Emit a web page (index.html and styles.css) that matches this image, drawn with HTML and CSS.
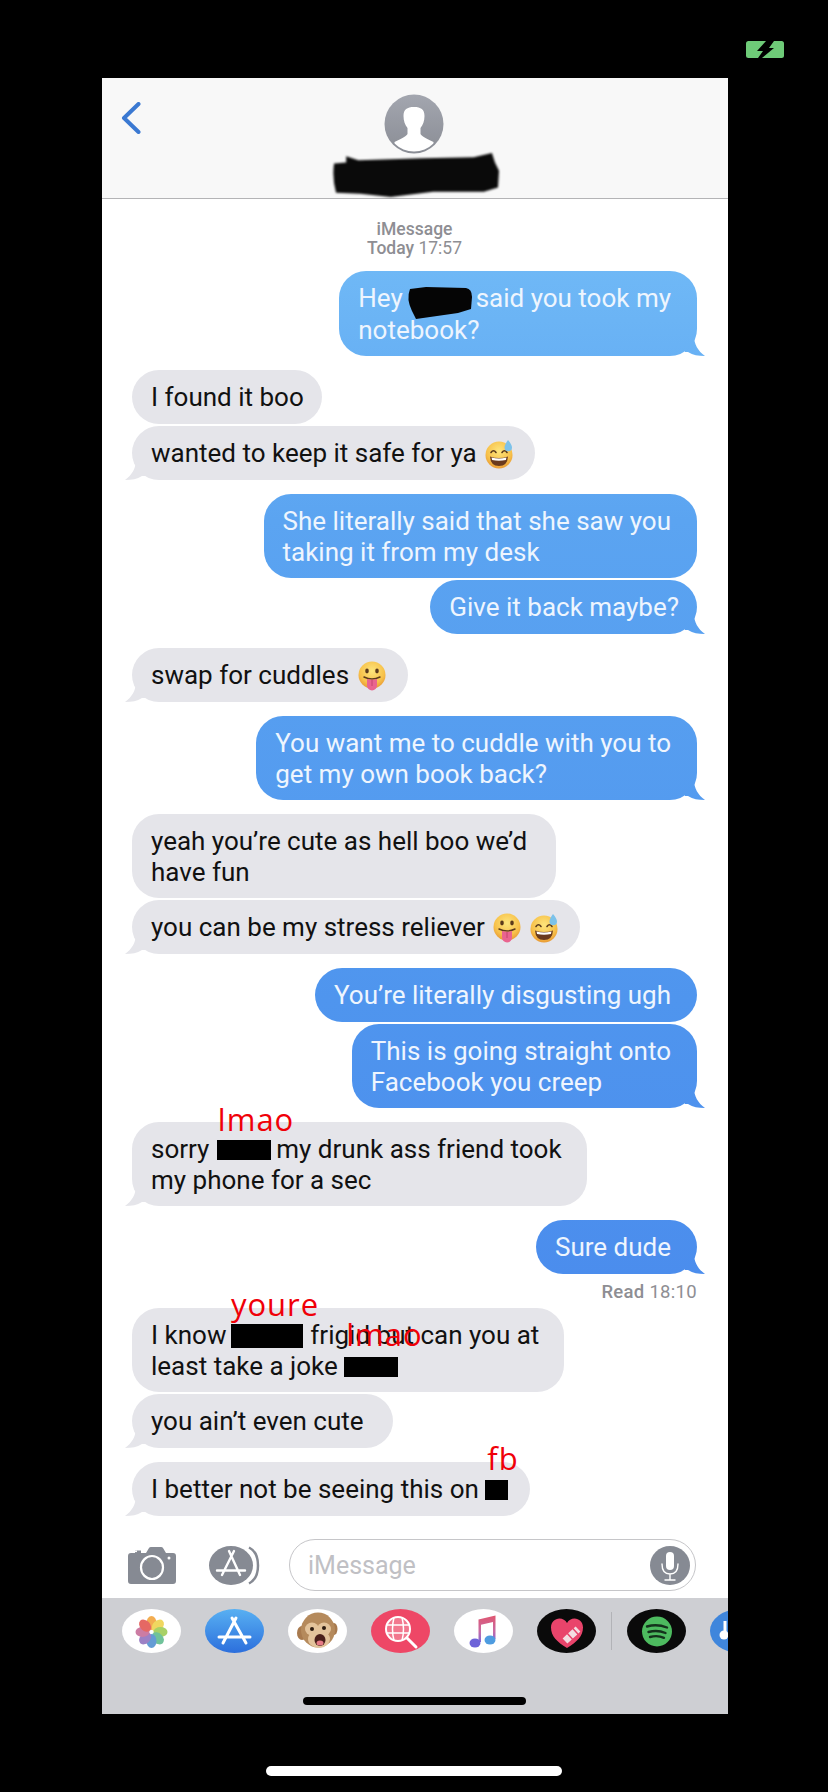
FILE: index.html
```html
<!DOCTYPE html>
<html lang="en">
<head>
    <meta charset="UTF-8">
    <meta name="viewport" content="width=device-width, initial-scale=1.0">
    <title>Messages</title>
    <link rel="stylesheet" href="styles.css">
</head>
<body>
    <svg class="defs" width="0" height="0">
        <defs>
            <radialGradient id="yellow" cx="50%" cy="35%" r="65%">
                <stop offset="0" stop-color="#fde57c"/>
                <stop offset="0.7" stop-color="#f7c14a"/>
                <stop offset="1" stop-color="#e99a34"/>
            </radialGradient>
            <linearGradient id="avatarFill" x1="0" y1="0" x2="0" y2="1">
                <stop offset="0" stop-color="#a3a6af"/>
                <stop offset="1" stop-color="#8a8d95"/>
            </linearGradient>
            <linearGradient id="noteFill" x1="0" y1="0" x2="0" y2="1">
                <stop offset="0" stop-color="#e0566f"/>
                <stop offset="0.6" stop-color="#c76ba5"/>
                <stop offset="1" stop-color="#7f68d8"/>
            </linearGradient>
            <symbol id="sweat" viewBox="0 0 28 30">
                <circle cx="14" cy="16" r="13.5" fill="url(#yellow)"/>
                <path d="M6 13.5q2.5-3.5 5 0M17 13.5q2.5-3.5 5 0" fill="none" stroke="#5b3a1c" stroke-width="1.6" stroke-linecap="round"/>
                <path d="M5 17.5q9 3 18 0q-.5 9.500-9 9.500t-9-9.500z" fill="#6a3a1e"/>
                <path d="M6.500 18.500q7.500 2 15 0l-.6 2.500q-7 1.500-13.800 0z" fill="#fff"/>
                <path d="M23 1q4 4.500 4 7.500a3.500 3.500 0 0 1-7.500 0q0-3 3.500-7.500z" fill="#7cc2ea"/>
            </symbol>
            <symbol id="tongue" viewBox="0 0 28 30">
                <circle cx="14" cy="14" r="13.500" fill="url(#yellow)"/>
                <ellipse cx="9" cy="10" rx="1.800" ry="2.400" fill="#5b3a1c"/>
                <ellipse cx="19" cy="10" rx="1.800" ry="2.400" fill="#5b3a1c"/>
                <path d="M6 16q8 4 16 0" fill="none" stroke="#5b3a1c" stroke-width="1.500" stroke-linecap="round"/>
                <path d="M9 18q5 1.500 10 0v6.500a5 5 0 0 1-10 0z" fill="#e9648f"/>
                <path d="M14 19v6" stroke="#c4426f" stroke-width="1"/>
            </symbol>
        </defs>
    </svg>

    <div class="status-bar">
        <svg class="charge" width="38" height="17" viewBox="0 0 38 17">
            <rect width="38" height="17" rx="2.500" fill="#6ecb78"/>
            <path d="M20 0H28L23 7H28L16 17H12L17 10H11Z" fill="#000"/>
        </svg>
    </div>

    <div class="screen">
        <header class="contact-bar">
            <svg class="back" width="20" height="32" viewBox="0 0 20 32">
                <path d="M17.500 2L3 16L17.500 30" fill="none" stroke="#3b79d2" stroke-width="4" stroke-linecap="round" stroke-linejoin="round"/>
            </svg>
            <svg class="avatar" width="60" height="60" viewBox="0 0 60 60">
                <clipPath id="avatarClip"><circle cx="30" cy="30" r="27.500"/></clipPath>
                <circle cx="30" cy="30" r="29.500" fill="url(#avatarFill)"/>
                <path clip-path="url(#avatarClip)" d="M30 13c-7 0-10.500 2.500-10.500 9c0 5 1.500 9 4 12v6c-1.500 3-7.500 5-13 8L10 60h40l-.5-12c-5.500-3-11.500-5-13-8v-6c2.500-3 4-7 4-12c0-6.500-3.500-9-10.500-9z" fill="#fff"/>
            </svg>
            <svg class="name-scribble" width="167" height="46" viewBox="0 0 165 44" preserveAspectRatio="none">
                <path d="M2 11L14 10L14 4L26 8L90 6L140 5L158 1L161 10L165 18L164 34L150 38L100 38L58 43L28 40L4 39Q0 25 2 11z" fill="#0a0a0a"/>
            </svg>
        </header>

        <main class="thread">
            <div class="stamp"><b>iMessage</b><br><b>Today</b> 17:57</div>

            <div class="bubble out tail">Hey <svg class="scribble" width="66" height="32" viewBox="0 0 66 32"><path d="M4 2L20 0L60 1Q66 2 66 10L65 22L52 26L10 32L6 24Q0 12 4 2z" fill="#050505"/></svg> said you took my<br>notebook?</div>

            <div class="bubble in group pad-s">I found it boo</div>
            <div class="bubble in tail cont">wanted to keep it safe for ya <svg class="emoji"><use href="#sweat"/></svg></div>

            <div class="bubble out group">She literally said that she saw you<br>taking it from my desk</div>
            <div class="bubble out tail cont pad-s">Give it back maybe?</div>

            <div class="bubble in tail group">swap for cuddles <svg class="emoji"><use href="#tongue"/></svg></div>

            <div class="bubble out tail group">You want me to cuddle with you to<br>get my own book back?</div>

            <div class="bubble in group pad-l">yeah you’re cute as hell boo we’d<br>have fun</div>
            <div class="bubble in tail cont">you can be my stress reliever <svg class="emoji"><use href="#tongue"/></svg> <svg class="emoji"><use href="#sweat"/></svg></div>

            <div class="bubble out group">You’re literally disgusting ugh</div>
            <div class="bubble out tail cont">This is going straight onto<br>Facebook you creep</div>

            <div class="bubble in tail group pad-m">sorry <span class="redact w-54 nudge"><span class="scrawl scrawl-lmao">lmao</span></span> my drunk ass friend took<br>my phone for a sec</div>

            <div class="bubble out tail group">Sure dude</div>
            <div class="read"><b>Read</b> 18:10</div>

            <div class="bubble in after-read pad-m">I know <span class="redact w-72 tall"><span class="scrawl scrawl-youre">youre</span></span> frigid but can you at<br>least take a joke <span class="redact w-54"><span class="scrawl scrawl-lmao-2">lmao</span></span></div>
            <div class="bubble in tail cont pad-l">you ain’t even cute</div>
            <div class="bubble in tail group">I better not be seeing this on <span class="redact w-23"><span class="scrawl scrawl-fb">fb</span></span></div>
        </main>

        <div class="composer">
            <svg class="camera" width="48" height="37" viewBox="0 0 48 37">
                <path d="M3 6h4V3.500h6V6h5l3-5q.5-1 2-1h10q1.500 0 2 1l3 5h7q3 0 3 3v25q0 3-3 3H3q-3 0-3-3V9q0-3 3-3z" fill="#868a93"/>
                <rect x="3" y="3.500" width="6" height="1.600" fill="#fff"/>
                <ellipse cx="24" cy="20.500" rx="11" ry="11.500" fill="none" stroke="#fff" stroke-width="2.200"/>
                <circle cx="41" cy="11" r="1.500" fill="#fff"/>
            </svg>
            <svg class="apps" width="52" height="39" viewBox="0 0 52 39">
                <ellipse cx="22" cy="19.500" rx="22" ry="19.500" fill="#868a93"/>
                <path d="M40 1.500c6 3 9 10 9 18s-3 15-9 18" fill="none" stroke="#868a93" stroke-width="2.500"/>
                <path d="M25 5L13 29M20 5L31 29M8 24.500H36" fill="none" stroke="#fff" stroke-width="2.400" stroke-linecap="round"/>
            </svg>
            <div class="input">
                <span class="placeholder">iMessage</span>
                <svg class="mic" width="40" height="39" viewBox="0 0 40 39">
                    <ellipse cx="20" cy="19.500" rx="20" ry="19.500" fill="#868a93"/>
                    <rect x="16" y="6" width="8" height="18" rx="4" fill="#fff"/>
                    <path d="M12 18c0 7 3.500 10 8 10s8-3 8-10M20 28v6M15 34h10" fill="none" stroke="#fff" stroke-width="1.400" stroke-linecap="round"/>
                </svg>
            </div>
        </div>

        <div class="tray">
            <div class="tile tile-light">
                <svg width="59" height="44" viewBox="0 0 59 44">
                    <g transform="translate(29.500 23)" opacity="0.88">
                        <ellipse cy="-9" rx="5" ry="7" fill="#f2a23a"/>
                        <ellipse cy="-9" rx="5" ry="7" fill="#eed24a" transform="rotate(45)"/>
                        <ellipse cy="-9" rx="5" ry="7" fill="#9ccb52" transform="rotate(90)"/>
                        <ellipse cy="-9" rx="5" ry="7" fill="#5dbb8c" transform="rotate(135)"/>
                        <ellipse cy="-9" rx="5" ry="7" fill="#4f8fd0" transform="rotate(180)"/>
                        <ellipse cy="-9" rx="5" ry="7" fill="#8f70bd" transform="rotate(225)"/>
                        <ellipse cy="-9" rx="5" ry="7" fill="#c56a97" transform="rotate(270)"/>
                        <ellipse cy="-9" rx="5" ry="7" fill="#e2544f" transform="rotate(315)"/>
                    </g>
                </svg>
            </div>
            <div class="tile tile-store">
                <svg width="59" height="44" viewBox="0 0 59 44">
                    <path d="M31 9L18 34M27 9L41 34M14 28H45" fill="none" stroke="#fff" stroke-width="3" stroke-linecap="round"/>
                </svg>
            </div>
            <div class="tile tile-light">
                <svg width="59" height="44" viewBox="0 0 59 44">
                    <ellipse cx="14" cy="24" rx="5" ry="7" fill="#a87a4e"/>
                    <ellipse cx="46" cy="20" rx="3.500" ry="6" fill="#a87a4e"/>
                    <ellipse cx="30" cy="21" rx="17" ry="17.500" fill="#b58a5c"/>
                    <ellipse cx="24" cy="20" rx="7" ry="6.500" fill="#e3c39b"/>
                    <ellipse cx="36" cy="20" rx="7" ry="6.500" fill="#e3c39b"/>
                    <ellipse cx="31" cy="30" rx="11" ry="9" fill="#e3c39b"/>
                    <circle cx="24" cy="20" r="2" fill="#2b1a10"/>
                    <circle cx="36" cy="19" r="2" fill="#2b1a10"/>
                    <ellipse cx="32" cy="31" rx="5.500" ry="6" fill="#4a1f1a"/>
                    <ellipse cx="32" cy="34" rx="3.500" ry="2.500" fill="#e77b86"/>
                </svg>
            </div>
            <div class="tile tile-search">
                <svg width="59" height="44" viewBox="0 0 59 44">
                    <circle cx="27" cy="20" r="12" fill="#f6a7b6" fill-opacity="0.5" stroke="#fff" stroke-width="2"/>
                    <path d="M15.500 16h23M15.500 24h23M23 8.500q-3 11.500 0 23M31 8.500q3 11.500 0 23" fill="none" stroke="#fff" stroke-width="1.500"/>
                    <path d="M36 29l9 9" stroke="#fff" stroke-width="3" stroke-linecap="round"/>
                </svg>
            </div>
            <div class="tile tile-light">
                <svg width="59" height="44" viewBox="0 0 59 44">
                    <path d="M24.500 33V10.500L41.500 6.500V30h-2.500V13L27 15.800V33z" fill="url(#noteFill)"/>
                    <ellipse cx="21" cy="34" rx="5.500" ry="4.500" fill="#6d63d8"/>
                    <ellipse cx="36" cy="31" rx="5.500" ry="4.500" fill="#4e9ce0"/>
                </svg>
            </div>
            <div class="tile tile-dark">
                <svg width="59" height="44" viewBox="0 0 59 44">
                    <path d="M30 39C20 33 14 27 14 18.500C14 13 18 9.500 22.500 9.500C25.500 9.500 28.500 11 30 14C31.500 11 34.500 9.500 37.500 9.500C42 9.500 46 13 46 18.500C46 27 40 33 30 39z" fill="#e9446b"/>
                    <path d="M28 32L41 20" stroke="#f3dde2" stroke-width="7" stroke-dasharray="6 1.500"/>
                </svg>
            </div>
            <div class="tray-divider"></div>
            <div class="tile tile-dark">
                <svg width="59" height="44" viewBox="0 0 59 44">
                    <circle cx="30" cy="22.500" r="15" fill="#4dbb5f"/>
                    <path d="M20 17.500q10-3 20 1M21.500 23q9-2.500 17 1M23 28q7.500-2 14 .8" fill="none" stroke="#14321c" stroke-width="2.400" stroke-linecap="round"/>
                </svg>
            </div>
            <div class="tile tile-blue">
                <svg width="59" height="44" viewBox="0 0 59 44">
                    <circle cx="14" cy="26" r="4.500" fill="#fff"/>
                    <path d="M15 26V12" stroke="#fff" stroke-width="3"/>
                </svg>
            </div>
            <div class="home-line"></div>
        </div>
    </div>

    <div class="home-indicator"></div>
</body>
</html>
```

FILE: styles.css
```css
* { box-sizing: border-box; }
body { margin: 0; height: 1792px; background: #000; font-family: Roboto, "Liberation Sans", sans-serif; overflow: hidden; }
.defs { position: absolute; }

.status-bar { height: 78px; padding: 41px 44px 0 0; display: flex; justify-content: flex-end; align-items: flex-start; }
.charge { display: block; }

.screen { width: 626px; height: 1636px; margin-left: 102px; background: #fff; display: flex; flex-direction: column; overflow: hidden; }

.contact-bar { height: 121px; flex: none; background: #f8f8f8; border-bottom: 1px solid #b4b4b6; position: relative; display: flex; flex-direction: column; align-items: center; padding-top: 16px; }
.back { position: absolute; left: 19px; top: 24px; }
.avatar { display: block; margin-left: -2px; }
.name-scribble { display: block; margin-top: -2px; margin-left: 0; filter: blur(1.2px); }

.thread { flex: 1; min-height: 0; padding: 21px 31px 0 30px; display: flex; flex-direction: column; align-items: flex-start; }
.stamp { align-self: center; font-size: 17.5px; line-height: 19px; color: #8e8e93; text-align: center; margin-bottom: 13px; }
.stamp b, .read b { font-weight: 500; }

.bubble { position: relative; min-height: 54px; font-size: 26px; line-height: 31px; padding: 12px 22px 10px 19px; border-radius: 27px; white-space: nowrap; }
.bubble.in { background: #e5e5ea; color: #111; }
.bubble.out { align-self: flex-end; color: #eef5fe; padding-right: 26px; background: linear-gradient(#6fb8f6 270px, #5ba4f1 520px, #4f95ee 1000px, #4b8ded 1280px) fixed; }
.bubble.pad-s { padding-right: 18px; }
.bubble.pad-m { padding-right: 25px; }
.bubble.pad-l { padding-right: 29px; }
.group { margin-top: 14px; }
.cont { margin-top: 2px; }
.after-read { margin-top: 6px; }

/* little tails under the last bubble of a run */
.tail::after { content: ""; position: absolute; bottom: 0; width: 20px; height: 20px; background: inherit; clip-path: path("M0 0H9C9 8 13 15 20 20C13 20 8 19 3 16L0 16Z"); }
.out.tail::after { right: -8px; }
.in.tail::after { left: -7px; transform: scaleX(-1); }

.emoji { width: 28px; height: 30px; vertical-align: -7px; margin-left: 2px; }
.scribble { vertical-align: -8px; margin: -4px -3px; }

.redact { display: inline-block; position: relative; height: 20px; background: #000; vertical-align: -2px; }
.redact.tall { height: 24px; vertical-align: -4px; margin: 0 1px 0 -2px; }
.redact.nudge { margin: 0 -1px 0 1px; }
.w-54 { width: 54px; }
.w-72 { width: 72px; }
.w-23 { width: 23px; }

/* red words scrawled on top of the screenshot */
.scrawl { position: absolute; color: #f00008; font-family: "Open Sans", sans-serif; font-weight: 400; font-size: 31px; line-height: 1; letter-spacing: 1px; }
.scrawl-lmao { left: 1px; top: -36px; }
.scrawl-youre { left: 0; top: -35px; }
.scrawl-lmao-2 { left: 2px; top: -38px; }
.scrawl-fb { left: 2px; top: -37px; }

.read { align-self: flex-end; font-size: 18.5px; letter-spacing: 0.3px; line-height: 20px; color: #8e8e93; margin-top: 8px; }

.composer { height: 81px; flex: none; padding: 22px 32px 7px 26px; display: flex; align-items: center; }
.camera { display: block; flex: none; margin-right: 33px; }
.apps { display: block; flex: none; margin-right: 28px; }
.input { flex: 1; height: 52px; border: 1.5px solid #c6c6c9; border-radius: 26px; display: flex; align-items: center; justify-content: space-between; padding: 0 5px 0 18px; }
.placeholder { font-size: 25px; color: #c0c0c4; }
.mic { display: block; }

.tray { height: 116px; flex: none; background: #cecfd3; position: relative; display: flex; align-items: flex-start; gap: 24px; padding: 11px 0 0 20px; }
.tile { width: 59px; height: 44px; flex: none; border-radius: 50%; overflow: hidden; }
.tile svg { display: block; }
.tile-light { background: #fff; }
.tile-store { background: linear-gradient(#58b0f2, #2c6fdc); }
.tile-search { background: #ee4766; }
.tile-dark { background: #0a0a0a; }
.tile-blue { background: #3f86dc; }
.tray-divider { width: 1px; height: 38px; margin: 3px -9px 0; background: #b2b3b7; flex: none; }
.home-line { position: absolute; left: 201px; bottom: 9px; width: 223px; height: 8px; border-radius: 4px; background: #000; }

.home-indicator { width: 296px; height: 10px; margin: 52px 0 0 266px; border-radius: 5px; background: #fff; }
```
